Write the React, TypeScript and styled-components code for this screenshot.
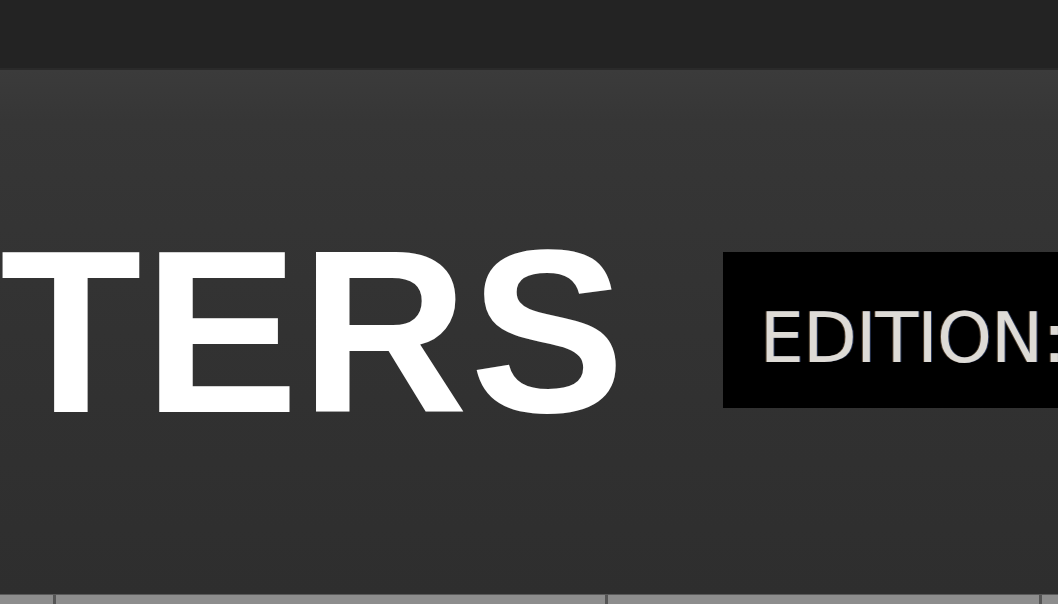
import React from 'react';
import styled, { createGlobalStyle } from 'styled-components';

const GlobalStyle = createGlobalStyle`
  html, body {
    margin: 0;
    padding: 0;
    background: #222222;
    overflow: hidden;
  }
  #root {
    width: 1058px;
    height: 604px;
  }
`;

const Page = styled.div`
  width: 1058px;
  height: 604px;
  display: flex;
  flex-direction: column;
  overflow: hidden;
`;

const TopBar = styled.div`
  height: 68px;
  flex-shrink: 0;
  background: #232323;
  border-bottom: 2px solid #2a2a2a;
`;

const Banner = styled.div`
  flex: 1;
  display: flex;
  align-items: center;
  gap: 96px;
  background: linear-gradient(180deg, #3b3b3b 0%, #363636 10%, #323232 50%, #2e2e2e 100%);
  overflow: hidden;
`;

const Title = styled.h1`
  margin: 0;
  font-family: "Liberation Sans", "Open Sans", sans-serif;
  font-weight: 700;
  font-size: 232px;
  line-height: 1;
  letter-spacing: 2px;
  color: #ffffff;
  white-space: nowrap;
`;

const EditionBadge = styled.div`
  flex-shrink: 0;
  width: 400px;
  height: 156px;
  background: #000000;
  display: flex;
  align-items: center;
  padding: 16px 0 0 37px;
  box-sizing: border-box;
  margin-top: -4px;
`;

const EditionText = styled.span`
  font-family: "DejaVu Sans", "Liberation Sans", sans-serif;
  font-weight: 400;
  font-size: 70px;
  letter-spacing: -1px;
  color: #dedbd6;
  text-shadow: 1px 0 0 rgba(120, 160, 255, 0.35), -1px 0 0 rgba(255, 200, 140, 0.3);
  white-space: nowrap;
`;

const BottomStrip = styled.div`
  height: 9px;
  flex-shrink: 0;
  background: #8d8d8d;
  border-top: 1px solid #5a5a5a;
  display: flex;
  padding-left: 53px;
`;

const Tick = styled.div<{ $gap: number }>`
  width: 3px;
  height: 100%;
  background: #555555;
  margin-right: ${(p) => p.$gap}px;
`;

const App: React.FC = () => {
  return (
    <Page>
      <GlobalStyle />
      <TopBar />
      <Banner>
        <Title>TERS</Title>
        <EditionBadge>
          <EditionText>EDITION:</EditionText>
        </EditionBadge>
      </Banner>
      <BottomStrip>
        <Tick $gap={549} />
        <Tick $gap={431} />
        <Tick $gap={0} />
      </BottomStrip>
    </Page>
  );
};

export default App;
